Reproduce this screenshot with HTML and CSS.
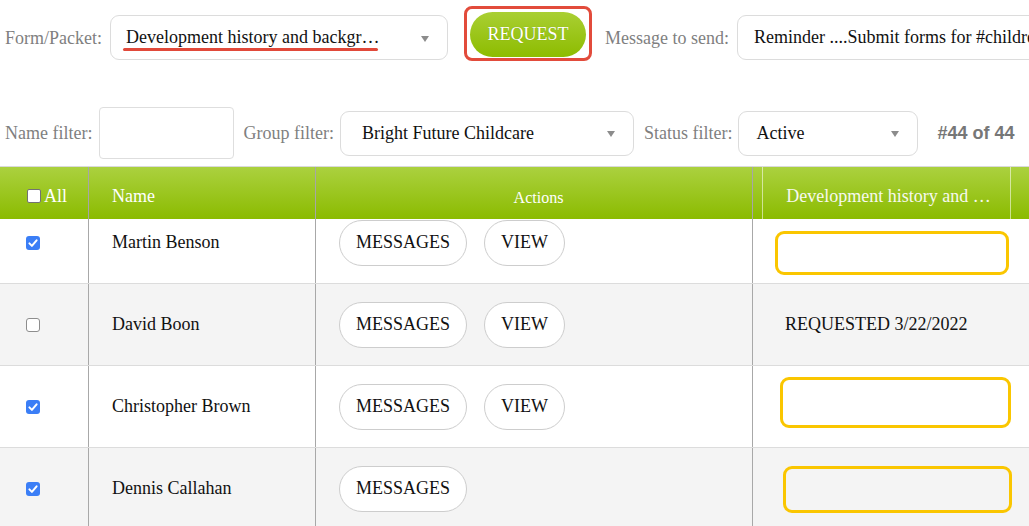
FILE: index.html
```html
<!DOCTYPE html>
<html lang="en">
<head>
<meta charset="utf-8">
<title>Form requests</title>
<link rel="stylesheet" href="styles.css">
</head>
<body>
<div class="page">
  <div class="bar bar-top">
    <span class="lbl lbl-form">Form/Packet:</span>
    <div class="select select-form">
      <span class="select-text">Development history and backgr…</span>
      <span class="caret"></span>
      <span class="mark-underline"></span>
    </div>
    <div class="mark-request"><button class="btn-request">REQUEST</button></div>
    <span class="lbl lbl-msg">Message to send:</span>
    <div class="input input-msg">Reminder ....Submit forms for #children</div>
  </div>

  <div class="bar bar-filters">
    <span class="lbl lbl-name">Name filter:</span>
    <div class="input input-name"></div>
    <span class="lbl lbl-group">Group filter:</span>
    <div class="select select-group">
      <span class="select-text">Bright Future Childcare</span>
      <span class="caret"></span>
    </div>
    <span class="lbl lbl-status">Status filter:</span>
    <div class="select select-status">
      <span class="select-text">Active</span>
      <span class="caret"></span>
    </div>
    <span class="count">#44 of 44</span>
  </div>

  <div class="table">
    <div class="thead">
      <div class="th th-check"><span class="cb cb-head"></span>All</div>
      <div class="th th-name">Name</div>
      <div class="th th-actions">Actions</div>
      <div class="th th-dev"><span class="th-dev-inner">Development history and …</span></div>
      <div class="th th-extra"></div>
    </div>
    <div class="tbody">
      <div class="rows">
        <div class="row">
          <div class="td td-check"><span class="cb cb-on"><svg viewBox="0 0 14 14" width="14" height="14"><polyline points="3.4,7.4 5.9,9.9 10.6,4.3" fill="none" stroke="#fff" stroke-width="2" stroke-linecap="round" stroke-linejoin="round"/></svg></span></div>
          <div class="td td-name">Martin Benson</div>
          <div class="td td-actions"><button class="pill">MESSAGES</button><button class="pill">VIEW</button></div>
          <div class="td td-dev"><span class="mark-box mark-box-1"></span></div>
          <div class="td td-extra"></div>
        </div>
        <div class="row row-alt">
          <div class="td td-check"><span class="cb cb-off"></span></div>
          <div class="td td-name">David Boon</div>
          <div class="td td-actions"><button class="pill">MESSAGES</button><button class="pill">VIEW</button></div>
          <div class="td td-dev">REQUESTED 3/22/2022</div>
          <div class="td td-extra"></div>
        </div>
        <div class="row">
          <div class="td td-check"><span class="cb cb-on"><svg viewBox="0 0 14 14" width="14" height="14"><polyline points="3.4,7.4 5.9,9.9 10.6,4.3" fill="none" stroke="#fff" stroke-width="2" stroke-linecap="round" stroke-linejoin="round"/></svg></span></div>
          <div class="td td-name">Christopher Brown</div>
          <div class="td td-actions"><button class="pill">MESSAGES</button><button class="pill">VIEW</button></div>
          <div class="td td-dev"><span class="mark-box mark-box-3"></span></div>
          <div class="td td-extra"></div>
        </div>
        <div class="row row-alt">
          <div class="td td-check"><span class="cb cb-on"><svg viewBox="0 0 14 14" width="14" height="14"><polyline points="3.4,7.4 5.9,9.9 10.6,4.3" fill="none" stroke="#fff" stroke-width="2" stroke-linecap="round" stroke-linejoin="round"/></svg></span></div>
          <div class="td td-name">Dennis Callahan</div>
          <div class="td td-actions"><button class="pill">MESSAGES</button></div>
          <div class="td td-dev"><span class="mark-box mark-box-4"></span></div>
          <div class="td td-extra"></div>
        </div>
      </div>
    </div>
  </div>
</div>
</body>
</html>
```

FILE: styles.css
```css
html, body {
  margin: 0;
  padding: 0;
  overflow: hidden;
  background: #fff;
}
body {
  width: 1029px;
  height: 526px;
  font-family: "Liberation Serif", "Times New Roman", serif;
  font-size: 18px;
  color: #111;
}
.page {
  width: 1029px;
  height: 526px;
  overflow: hidden;
}

/* toolbars */
.bar {
  display: flex;
  align-items: center;
  padding-left: 5px;
  white-space: nowrap;
}
.bar-top {
  height: 55px;
  padding-top: 6px;
}
.bar-top .lbl,
.bar-top .select,
.bar-top .input {
  margin-top: 8px;
}
.bar-filters {
  height: 52px;
  margin-top: 46px;
}
.lbl {
  color: #7f7f7f;
  line-height: 22px;
}
.select,
.input {
  position: relative;
  display: flex;
  align-items: center;
  box-sizing: border-box;
  height: 45px;
  border: 1px solid #dcdcdc;
  border-radius: 9px;
  background: #fff;
  flex: none;
}
.select-text {
  color: #111;
}
.caret {
  position: absolute;
  right: 18px;
  top: 50%;
  margin-top: -2px;
  width: 0;
  height: 0;
  border-left: 4px solid transparent;
  border-right: 4px solid transparent;
  border-top: 6px solid #8c8c8c;
}
.select-form {
  width: 338px;
  margin-left: 8px;
  padding-left: 15px;
}
.mark-underline {
  position: absolute;
  left: 12px;
  top: 32px;
  width: 255px;
  height: 3px;
  border-radius: 2px;
  background: #e1493a;
}
.mark-request {
  flex: none;
  margin-left: 16px;
  border: 3px solid #e24b3b;
  border-radius: 8px;
  padding: 3px 3px 1px 3px;
  display: flex;
}
.btn-request {
  width: 116px;
  height: 45px;
  padding: 0;
  border: none;
  border-radius: 23px;
  background: linear-gradient(#a9cf33, #8dbc00);
  color: #fff;
  font-family: "Liberation Serif", "Times New Roman", serif;
  font-size: 18px;
  text-shadow: 0 0 1px rgba(0, 0, 0, 0.2);
}
.lbl-msg {
  margin-left: 13px;
}
.input-msg {
  width: 340px;
  margin-left: 8px;
  padding-left: 16px;
  overflow: hidden;
}

.input-name {
  width: 135px;
  height: 52px;
  border-color: #dedede;
  border-radius: 4px;
  margin-left: 7px;
}
.lbl-group {
  margin-left: 9px;
}
.select-group {
  width: 294px;
  margin-left: 6px;
  padding-left: 21px;
}
.lbl-status {
  margin-left: 10px;
}
.select-status {
  width: 180px;
  margin-left: 6px;
  padding-left: 17px;
}
.count {
  margin-left: 19px;
  font-family: "Liberation Sans", Arial, sans-serif;
  font-weight: bold;
  font-size: 18px;
  color: #777;
}

/* table */
.table {
  margin-top: 7px;
  border-top: 1px solid #dadada;
}
.thead,
.row {
  display: grid;
  grid-template-columns: 89px 227px 437px 258px 1fr;
}
.thead {
  height: 52px;
  background: linear-gradient(#abd13f, #8bbb00);
  color: #fff;
}
.th {
  display: flex;
  align-items: center;
  box-sizing: border-box;
  white-space: nowrap;
  padding-top: 6px;
}
.th-check,
.th-name,
.th-actions {
  border-right: 1px solid #a6a6a6;
}
.th-check {
  padding-left: 27px;
}
.th-name {
  padding-left: 23px;
}
.th-actions {
  justify-content: center;
  font-size: 16px;
  padding-top: 9px;
  padding-left: 9px;
}
.th-dev {
  padding-top: 0;
  padding-left: 9px;
  border-right: 1px solid rgba(255, 255, 255, 0.55);
}
.th-dev-inner {
  display: flex;
  align-items: center;
  justify-content: center;
  height: 100%;
  box-sizing: border-box;
  padding-top: 6px;
  padding-left: 4px;
  flex: 1;
  border-left: 1px solid rgba(255, 255, 255, 0.55);
  color: #f7f9ef;
}

.tbody {
  height: 307px;
  overflow: hidden;
}
.rows {
  margin-top: -17px;
}
.row {
  height: 82px;
  box-sizing: border-box;
  border-bottom: 1px solid #dcdcdc;
  background: #fff;
}
.row-alt {
  background: #f4f4f4;
}
.td {
  display: flex;
  align-items: center;
  box-sizing: border-box;
  white-space: nowrap;
}
.td-check,
.td-name,
.td-actions {
  border-right: 1px solid #a8a8a8;
}
.td-check {
  padding-left: 26px;
}
.td-name {
  padding-left: 23px;
}
.td-actions {
  padding-left: 23px;
  gap: 17px;
}
.td-dev {
  position: relative;
  padding-left: 32px;
}

/* checkboxes */
.cb {
  display: inline-flex;
  box-sizing: border-box;
  width: 14px;
  height: 14px;
  border-radius: 3px;
  flex: none;
}
.cb-on {
  background: #3b7ef6;
}
.cb-off {
  background: #fff;
  border: 1px solid #8d8d8d;
}
.cb-head {
  width: 14px;
  height: 14px;
  background: #fff;
  border: 1px solid #727272;
  border-radius: 2px;
  margin-right: 3px;
}

/* pill buttons */
.pill {
  height: 46px;
  padding: 0 16px;
  border: 1px solid #cdcdcd;
  border-radius: 23px;
  background: #fff;
  color: #111;
  font-family: "Liberation Serif", "Times New Roman", serif;
  font-size: 18px;
}

/* yellow annotation boxes */
.mark-box {
  position: absolute;
  box-sizing: border-box;
  border: 3px solid #fac600;
  border-radius: 9px;
}
.mark-box-1 {
  left: 22px;
  top: 29px;
  width: 234px;
  height: 44px;
}
.mark-box-3 {
  left: 27px;
  top: 11px;
  width: 231px;
  height: 51px;
}
.mark-box-4 {
  left: 30px;
  top: 18px;
  width: 229px;
  height: 47px;
}
```
